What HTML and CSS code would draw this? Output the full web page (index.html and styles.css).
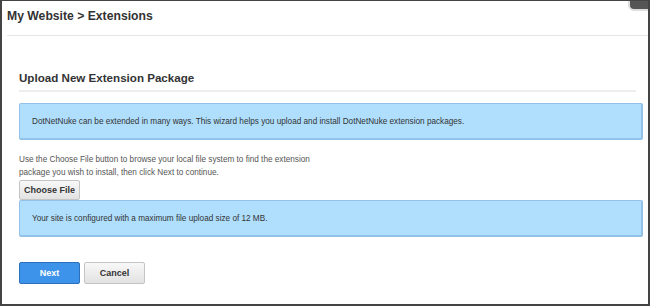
FILE: index.html
```html
<!DOCTYPE html>
<html lang="en">
<head>
    <meta charset="UTF-8">
    <title>My Website &gt; Extensions</title>
    <link rel="stylesheet" href="styles.css">
</head>
<body>
    <div class="window">
        <span class="corner"></span>
        <div class="page-title">My Website &gt; Extensions</div>

        <div class="wizard">
            <h2>Upload New Extension Package</h2>

            <div class="note">DotNetNuke can be extended in many ways. This wizard helps you upload and install DotNetNuke extension packages.</div>

            <p class="help">Use the Choose File button to browse your local file system to find the extension<br>package you wish to install, then click Next to continue.</p>
            <button class="btn btn-file">Choose File</button>

            <div class="note note-flush">Your site is configured with a maximum file upload size of 12 MB.</div>

            <div class="actions">
                <button class="btn btn-primary">Next</button>
                <button class="btn">Cancel</button>
            </div>
        </div>
    </div>
</body>
</html>
```

FILE: styles.css
```css
html, body {
    margin: 0;
    padding: 0;
}
body {
    font-family: "Liberation Sans", Arial, sans-serif;
    color: #333;
    background: #fff;
}
.window {
    position: relative;
    width: 650px;
    height: 306px;
    box-sizing: border-box;
    border: 2px solid #444;
    border-top-width: 1px;
    overflow: hidden;
}
.corner {
    position: absolute;
    top: -6px;
    right: -6px;
    width: 22px;
    height: 12px;
    background: #555;
    border: 2px solid #ddd;
    border-radius: 6px;
}
.page-title {
    margin: 0 0 0 5px;
    padding: 8px 0 0 0;
    height: 26px;
    font-size: 12.2px;
    font-weight: bold;
    color: #333;
    border-bottom: 1px solid #e6e6e6;
}
.wizard {
    padding: 0 5px 0 17px;
}
.wizard h2 {
    margin: 35px 7px 0 0;
    padding-bottom: 5px;
    font-size: 11.6px;
    line-height: 14px;
    font-weight: bold;
    color: #333;
    border-bottom: 2px solid #eee;
}
.note {
    margin-top: 11px;
    padding: 12px 12px 11px 12px;
    font-size: 8.2px;
    line-height: 11px;
    color: #333;
    background: #afdffd;
    border: 1px solid #92c1e9;
    border-width: 1px 2px 2px 1px;
    border-radius: 2px;
}
.note-flush {
    margin-top: 0;
}
.help {
    margin: 13px 0 1px 0;
    font-size: 8.2px;
    line-height: 13px;
    color: #555;
}
.btn {
    display: block;
    width: 61px;
    height: 22px;
    padding: 0;
    font-family: "Liberation Sans", Arial, sans-serif;
    font-size: 9px;
    font-weight: bold;
    color: #333;
    background: linear-gradient(#f8f8f8, #e2e2e2);
    border: 1px solid #c4c4c4;
    border-radius: 2px;
}
.btn-file {
    height: 20px;
}
.actions {
    display: flex;
    gap: 4px;
    margin-top: 25px;
}
.btn-primary {
    color: #fff;
    background: #3d93ea;
    border-color: #2c70bb;
}
```
